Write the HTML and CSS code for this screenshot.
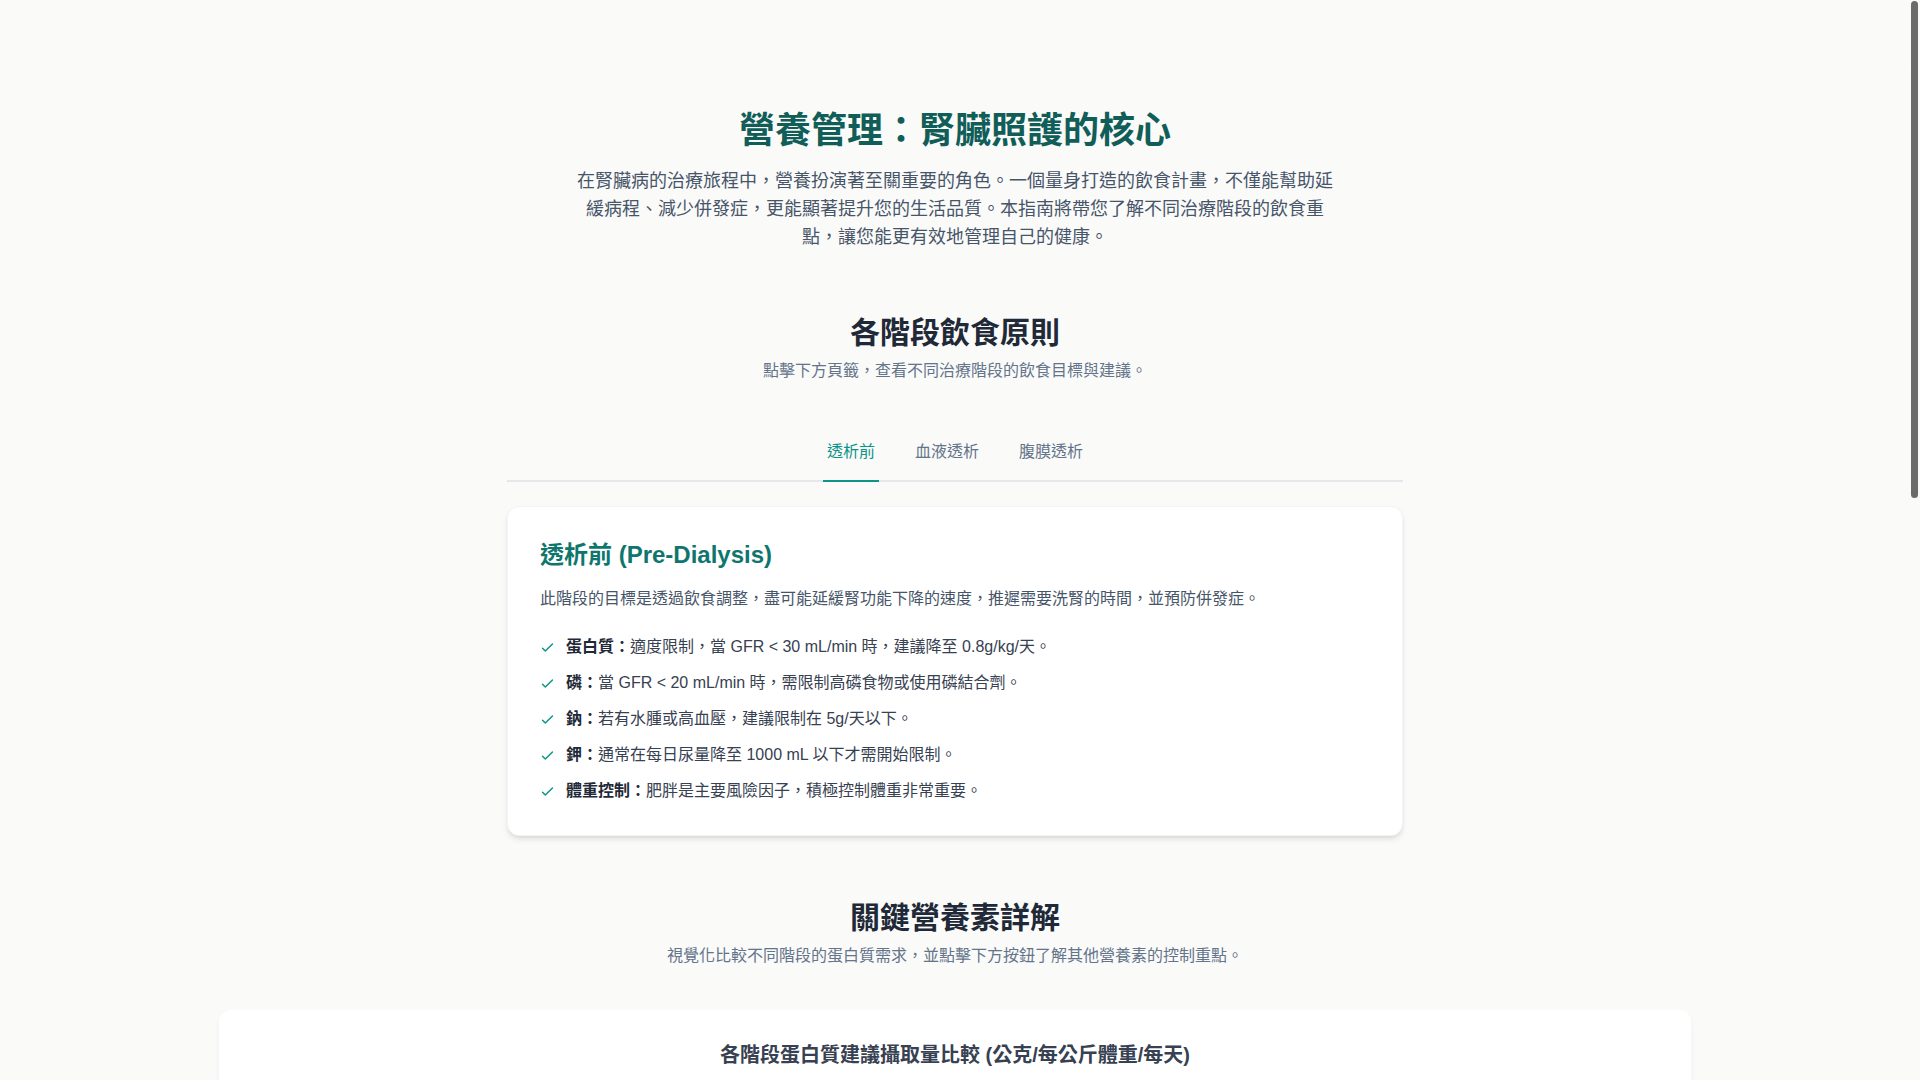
FILE: index.html
```html
<!DOCTYPE html>
<html lang="zh-Hant">
<head>
<meta charset="utf-8">
<title>營養管理：腎臟照護的核心</title>
<link rel="stylesheet" href="styles.css">
</head>
<body>
<div class="scroll-thumb"></div>
<header class="topbar"></header>
<main class="container">
  <section class="intro">
    <h1 class="page-title">營養管理：腎臟照護的核心</h1>
    <p class="lead">在腎臟病的治療旅程中，營養扮演著至關重要的角色。一個量身打造的飲食計畫，不僅能幫助延緩病程、減少併發症，更能顯著提升您的生活品質。本指南將帶您了解不同治療階段的飲食重點，讓您能更有效地管理自己的健康。</p>
  </section>

  <section class="section">
    <h2 class="section-title">各階段飲食原則</h2>
    <p class="section-sub">點擊下方頁籤，查看不同治療階段的飲食目標與建議。</p>
    <div class="narrow">
      <nav class="tabs">
        <button class="tab active">透析前</button>
        <button class="tab">血液透析</button>
        <button class="tab">腹膜透析</button>
      </nav>
      <div class="card">
        <h3 class="card-title">透析前 (Pre-Dialysis)</h3>
        <p class="card-desc">此階段的目標是透過飲食調整，盡可能延緩腎功能下降的速度，推遲需要洗腎的時間，並預防併發症。</p>
        <ul class="checklist">
          <li><svg class="check" viewBox="0 0 24 24"><path d="M5 13l4 4L19 7"/></svg><span><b>蛋白質：</b>適度限制，當 GFR &lt; 30 mL/min 時，建議降至 0.8g/kg/天。</span></li>
          <li><svg class="check" viewBox="0 0 24 24"><path d="M5 13l4 4L19 7"/></svg><span><b>磷：</b>當 GFR &lt; 20 mL/min 時，需限制高磷食物或使用磷結合劑。</span></li>
          <li><svg class="check" viewBox="0 0 24 24"><path d="M5 13l4 4L19 7"/></svg><span><b>鈉：</b>若有水腫或高血壓，建議限制在 5g/天以下。</span></li>
          <li><svg class="check" viewBox="0 0 24 24"><path d="M5 13l4 4L19 7"/></svg><span><b>鉀：</b>通常在每日尿量降至 1000 mL 以下才需開始限制。</span></li>
          <li><svg class="check" viewBox="0 0 24 24"><path d="M5 13l4 4L19 7"/></svg><span><b>體重控制：</b>肥胖是主要風險因子，積極控制體重非常重要。</span></li>
        </ul>
      </div>
    </div>
  </section>

  <section class="section">
    <h2 class="section-title">關鍵營養素詳解</h2>
    <p class="section-sub">視覺化比較不同階段的蛋白質需求，並點擊下方按鈕了解其他營養素的控制重點。</p>
    <div class="wide-card">
      <h3 class="chart-title">各階段蛋白質建議攝取量比較 (公克/每公斤體重/每天)</h3>
      <div class="chart">
        <div class="bar-group"><div class="bar" style="height: 48%"></div><span class="bar-label">透析前</span></div>
        <div class="bar-group"><div class="bar" style="height: 72%"></div><span class="bar-label">血液透析</span></div>
        <div class="bar-group"><div class="bar" style="height: 78%"></div><span class="bar-label">腹膜透析</span></div>
      </div>
    </div>
    <div class="nutrient-buttons">
      <button class="nbtn">鈉</button>
      <button class="nbtn">鉀</button>
      <button class="nbtn">磷</button>
      <button class="nbtn">水分</button>
    </div>
    <div class="detail-card narrow">
      <h3 class="card-title">鈉 (Sodium)</h3>
      <p class="card-desc">控制鈉攝取有助於控制血壓與水腫，建議每日鹽分攝取少於 5 公克。</p>
    </div>
  </section>

  <section class="section">
    <h2 class="section-title">實用飲食技巧</h2>
    <p class="section-sub">日常生活中的小改變，帶來大大的健康差異。</p>
    <div class="tips">
      <div class="tip">少用加工食品</div>
      <div class="tip">以香料代替鹽</div>
      <div class="tip">蔬菜先燙過再烹調</div>
    </div>
  </section>
</main>
<footer class="footer">本資訊僅供參考，請與您的醫療團隊討論個人化飲食計畫。</footer>
</body>
</html>
```

FILE: styles.css
```css
html { background: #fafaf9; }
body {
  margin: 0;
  padding-right: 10px;
  background: #fafaf9;
  font-family: "Liberation Sans", "Noto Sans CJK TC", sans-serif;
  color: #374151;
}
.scroll-thumb {
  position: fixed;
  top: 1px;
  right: 2px;
  width: 7px;
  height: 497px;
  border-radius: 4px;
  background: #6b6b6b;
  z-index: 10;
}
.topbar {
  height: 64px;
  background: rgba(255,255,255,0.12);
  box-shadow: 0 1px 2px rgba(0,0,0,0.008);
}
.container {
  max-width: 1536px;
  margin: 0 auto;
  padding: 47px 32px 0;
  box-sizing: border-box;
}
.intro { text-align: center; margin-bottom: 64px; }
.page-title {
  margin: 0 0 16px;
  font-size: 36px;
  line-height: 40px;
  font-weight: 700;
  color: #115e59;
}
.lead {
  max-width: 768px;
  margin: 0 auto;
  font-size: 18px;
  line-height: 28px;
  color: #475569;
}
.section { margin-bottom: 64px; }
.section-title {
  margin: 0;
  text-align: center;
  font-size: 30px;
  line-height: 36px;
  font-weight: 700;
  color: #1f2937;
}
.section-sub {
  margin: 8px 0 0;
  text-align: center;
  font-size: 16px;
  line-height: 24px;
  color: #64748b;
}
.narrow { max-width: 896px; margin: 0 auto; }
.tabs {
  margin-top: 41px;
  display: flex;
  justify-content: center;
  gap: 32px;
  border-bottom: 2px solid #e5e7eb;
}
.tab {
  border: 0;
  background: none;
  padding: 16px 4px;
  margin-bottom: -2px;
  font: inherit;
  font-size: 16px;
  line-height: 24px;
  color: #64748b;
  border-bottom: 2px solid transparent;
}
.tab.active { color: #0d9488; border-bottom-color: #0d9488; }
.card {
  margin-top: 24px;
  background: #fff;
  border: 1px solid #f3f4f4;
  border-radius: 12px;
  padding: 32px 32px 32px;
  box-shadow: 0 4px 6px -1px rgba(0,0,0,0.1), 0 2px 4px -2px rgba(0,0,0,0.1);
}
.card-title {
  margin: 0 0 16px;
  font-size: 24px;
  line-height: 32px;
  font-weight: 700;
  color: #0f766e;
}
.card-desc {
  margin: 0 0 24px;
  font-size: 16px;
  line-height: 24px;
  color: #475569;
}
.checklist {
  list-style: none;
  margin: 0;
  padding: 0;
  display: flex;
  flex-direction: column;
  gap: 12px;
}
.checklist li {
  display: flex;
  align-items: center;
  font-size: 16px;
  line-height: 24px;
  color: #374151;
}
.checklist b { color: #1f2937; font-weight: 700; }
.check {
  width: 17px;
  height: 17px;
  flex: none;
  margin-left: -1px;
  margin-right: 10px;
  fill: none;
  stroke: #0d9488;
  stroke-width: 2.1;
  stroke-linecap: round;
  stroke-linejoin: round;
}
.wide-card {
  margin-top: 42px;
  background: #fff;
  border-radius: 12px;
  padding: 31px 32px 32px;
  box-shadow: 0 4px 6px -1px rgba(0,0,0,0.06), 0 2px 4px -2px rgba(0,0,0,0.05);
}
.chart-title {
  margin: 0 0 24px;
  text-align: center;
  font-size: 20px;
  line-height: 28px;
  font-weight: 700;
  color: #374151;
}
.chart {
  height: 360px;
  display: flex;
  justify-content: space-around;
  align-items: flex-end;
  border-bottom: 1px solid #e5e7eb;
  padding: 0 120px;
}
.bar-group {
  height: 100%;
  display: flex;
  flex-direction: column;
  justify-content: flex-end;
  align-items: center;
  width: 160px;
}
.bar { width: 100%; background: #5eead4; border-radius: 4px 4px 0 0; }
.bar-label { margin-top: 8px; font-size: 14px; color: #475569; }
.nutrient-buttons {
  margin-top: 40px;
  display: flex;
  justify-content: center;
  gap: 16px;
}
.nbtn {
  border: 1px solid #99f6e4;
  background: #fff;
  color: #0f766e;
  font: inherit;
  font-size: 16px;
  padding: 8px 24px;
  border-radius: 9999px;
}
.detail-card {
  margin-top: 24px;
  background: #fff;
  border-radius: 12px;
  padding: 32px;
  box-sizing: border-box;
}
.tips {
  margin-top: 40px;
  display: grid;
  grid-template-columns: repeat(3, 1fr);
  gap: 24px;
}
.tip {
  background: #fff;
  border-radius: 12px;
  padding: 48px 24px;
  text-align: center;
  font-size: 18px;
  color: #115e59;
}
.footer {
  padding: 40px 10px 48px 0;
  text-align: center;
  font-size: 14px;
  color: #94a3b8;
}
```
